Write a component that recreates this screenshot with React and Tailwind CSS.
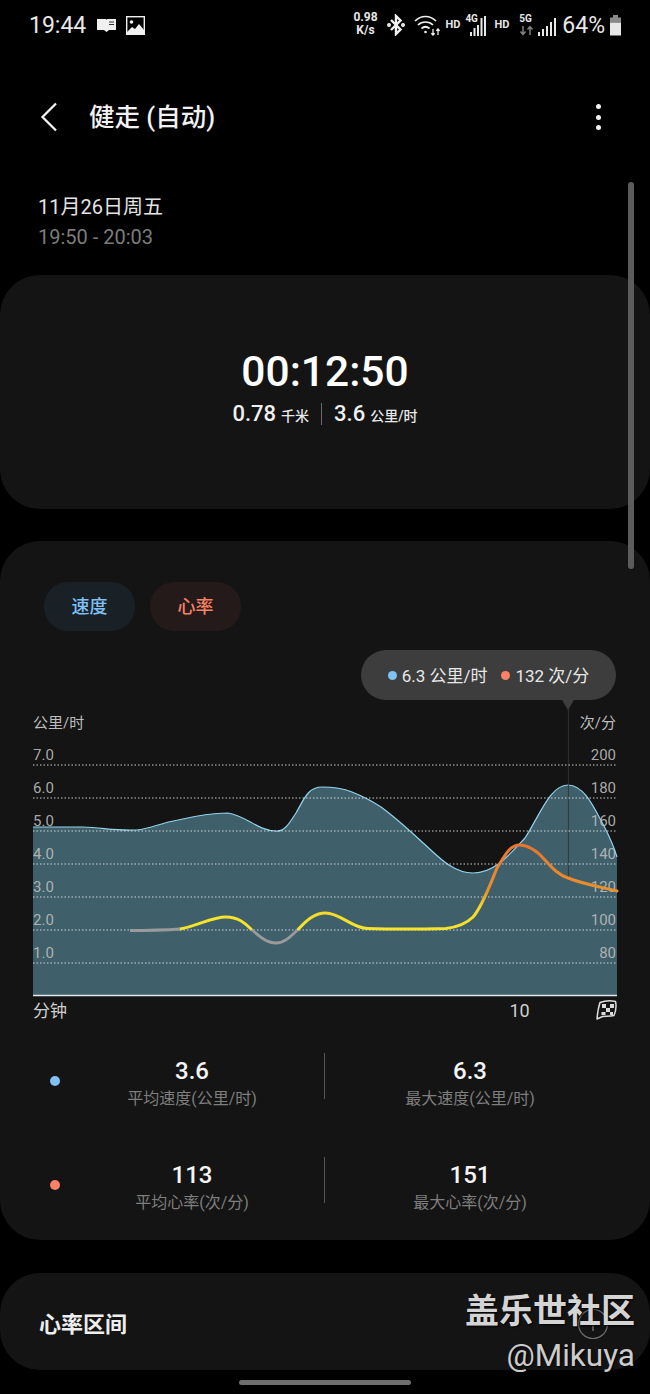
const FONT = { fontFamily: '"Roboto","Noto Sans CJK SC",sans-serif' };

function Signal() {
  return (
    <svg width="20" height="22" viewBox="0 0 20 22" fill="#e8e8e8">
      <rect x="0" y="17" width="2" height="4" />
      <rect x="4" y="14" width="2" height="7" />
      <rect x="8" y="11" width="2" height="10" />
      <rect x="12" y="7" width="2" height="14" />
      <rect x="16" y="3" width="2" height="18" />
    </svg>
  );
}

function StatusBar() {
  return (
    <div className="flex h-[48px] items-center justify-between pl-[29px] pr-[28px] pt-[2px] text-[#e8e8e8]">
      <div className="flex items-center gap-[10px]">
        <span className="text-[23px] leading-none">19:44</span>
        <svg className="ml-[1px]" width="19" height="18" viewBox="0 0 19 18" fill="#f0f0f0">
          <path d="M0 3h8.500c.5 0 .9.3 1 .7.1-.4.5-.7 1-.7H19v11h-7l-2.500 2L7 14H0z" />
          <path d="M12 6h5M12 8.500h5" stroke="#333" strokeWidth="1" />
        </svg>
        <svg width="19" height="19" viewBox="0 0 19 19">
          <rect x="0.700" y="0.700" width="17.600" height="17.600" fill="none" stroke="#f0f0f0" strokeWidth="1.400" />
          <circle cx="5.500" cy="6" r="1.800" fill="#f0f0f0" />
          <path d="M1 16l5-5 3 2 4-5 5 6v4H1z" fill="#f0f0f0" />
        </svg>
      </div>
      <div className="flex items-center">
        <div className="-mt-[2px] flex w-[26px] flex-col items-center text-[12px] font-bold leading-[13px]">
          <span>0.98</span>
          <span>K/s</span>
        </div>
        <svg className="ml-[9px]" width="18" height="22" viewBox="0 0 18 22" fill="none" stroke="#f2f2f2" strokeWidth="2.400">
          <path d="M4 6l9.500 9.500L9 20V2l4.500 4.500L4 16" />
          <circle cx="2" cy="11" r="0.800" fill="#f2f2f2" />
          <circle cx="16" cy="11" r="0.800" fill="#f2f2f2" />
        </svg>
        <svg className="ml-[9px]" width="26" height="22" viewBox="0 0 26 22" fill="none" stroke="#f0f0f0" strokeWidth="1.700">
          <path d="M1 7c6-6 15-6 21 0M4 11c4-4 11-4 15 0M7.500 14.500c2.500-2.200 5.500-2.200 8 0" />
          <circle cx="11.500" cy="18" r="1.300" fill="#f0f0f0" stroke="none" />
          <path d="M19 15v6M17.300 19.200l1.700 1.800 1.700-1.800M24 21v-6M22.300 16.800l1.700-1.800 1.700 1.800" strokeWidth="1.300" />
        </svg>
        <span className="ml-[5px] text-[11px] font-bold">HD</span>
        <div className="relative ml-[5px] h-[24px] w-[22px]">
          <span className="absolute left-0 top-0 text-[10px] font-bold leading-[12px]">4G</span>
          <svg className="absolute left-0 top-0" width="22" height="24" viewBox="0 0 22 24" fill="#e8e8e8">
            <rect x="5" y="19" width="2" height="4" />
            <rect x="8.500" y="15" width="2" height="8" />
            <rect x="12" y="12" width="2" height="11" />
            <rect x="15.500" y="5" width="2" height="18" />
            <rect x="19" y="3" width="2" height="20" />
          </svg>
        </div>
        <span className="ml-[7px] text-[11px] font-bold">HD</span>
        <div className="relative ml-[10px] h-[24px] w-[16px]">
          <span className="absolute left-0 top-0 text-[10px] font-bold leading-[12px]">5G</span>
          <svg className="absolute left-0 top-[13px]" width="16" height="10" viewBox="0 0 16 10" fill="none" stroke="#7d7d7d" strokeWidth="1.500">
            <path d="M4 0v8M1.500 5.500L4 8.500l2.500-3M11 9V1M8.500 3.500L11 .5l2.500 3" />
          </svg>
        </div>
        <div className="ml-[3px] mt-[2px] flex">
          <Signal />
        </div>
        <span className="ml-[4px] text-[23px] leading-none">64%</span>
        <svg className="ml-[4px]" width="13" height="24" viewBox="0 0 13 24">
          <rect x="4" y="2" width="5" height="3" fill="#8a8a8a" />
          <rect x="1" y="4.500" width="11" height="5" fill="#8a8a8a" />
          <rect x="1" y="9.500" width="11" height="13" fill="#e8e8e8" />
        </svg>
      </div>
    </div>
  );
}

function Header() {
  return (
    <div className="mt-[44px] flex h-[50px] items-center justify-between pl-[39px] pr-[49px]">
      <div className="flex items-center">
        <svg width="20" height="32" viewBox="0 0 20 32" fill="none" stroke="#f2f2f2" strokeWidth="2.300">
          <path d="M17 2.500L3.500 16 17 29.500" />
        </svg>
        <span className="ml-[30px] pt-[2px] text-[25.500px] font-medium leading-none text-[#f2f2f2]">健走 (自动)</span>
      </div>
      <div className="flex flex-col gap-[5.500px]">
        <span className="size-[5px] rounded-full bg-[#f2f2f2]" />
        <span className="size-[5px] rounded-full bg-[#f2f2f2]" />
        <span className="size-[5px] rounded-full bg-[#f2f2f2]" />
      </div>
    </div>
  );
}

function Summary() {
  return (
    <div className="mt-[26px] flex h-[234px] flex-col items-center rounded-[40px] bg-[#141414] pt-[73px] text-white">
      <div className="text-[42.500px] font-medium leading-[48px]">00:12:50</div>
      <div className="mt-[6px] flex h-[24px] items-center font-medium">
        <span className="text-[22px] leading-none text-[#f0f0f0]">0.78</span>
        <span className="ml-[5px] mt-[4px] text-[14px] leading-none text-[#e8e8e8]">千米</span>
        <span className="mx-[12px] h-[22px] w-px bg-[#6a6a6a]" />
        <span className="text-[22px] leading-none text-[#f0f0f0]">3.6</span>
        <span className="ml-[5px] mt-[4px] text-[14px] leading-none text-[#e8e8e8]">公里/时</span>
      </div>
    </div>
  );
}

const AREA_LINE =
  "M33 827C50 827 65 827 83 827C105 828 115 831 137 830C150 829 160 823 178 820C195 816 212 813 228 813C245 815 258 831 276 831C285 832 290 822 296 813C304 799 308 787 322 787C335 787 342 788 352 792C362 796 372 801 381 807C396 818 408 829 421 841C438 856 452 873 473 873C495 873 510 854 525 838C540 815 550 785 568 785C585 785 595 810 605 828C610 838 614 847 617 857";
const LINE_A =
  "M180 929C197 926 212 917 226 917C238 917 245 923 251 929";
const LINE_GRAY = "M130 930.500C150 930.500 165 930 180 929";
const LINE_B =
  "M251 929C260 937 267 943 276 943C285 943 292 935 298.500 929";
const LINE_C =
  "M298.500 929C306 921 314 913 325.500 913C340 913 352 928 367 928.500C385 929 425 929 446 928.500C458 927 467 923 473 917C482 907 490 885 497 868C505 855 510 845 519.500 845C530 845 538 852 545 860C553 869 559 875 568 878C583 884 600 887 617 891";

function Chart() {
  const grid = [765, 798, 831, 864, 897, 930, 963];
  const left = ["7.0", "6.0", "5.0", "4.0", "3.0", "2.0", "1.0"];
  const right = ["200", "180", "160", "140", "120", "100", "80"];
  return (
    <svg className="block" width="650" height="320" viewBox="0 700 650 320" style={FONT}>
      <defs>
        <linearGradient id="hr" gradientUnits="userSpaceOnUse" x1="0" y1="845" x2="0" y2="925">
          <stop offset="0" stopColor="#e9752c" />
          <stop offset="0.580" stopColor="#ec912a" />
          <stop offset="0.760" stopColor="#f3d52a" />
          <stop offset="1" stopColor="#f6e32c" />
        </linearGradient>
      </defs>
      <path d={`${AREA_LINE}L617 995L33 995Z`} fill="#3f5f6b" />
      <path d={AREA_LINE} fill="none" stroke="#93d3ec" strokeWidth="1.200" />
      <line x1="568.500" y1="700" x2="568.500" y2="878" stroke="#333333" strokeOpacity="0.800" strokeWidth="1.200" />
      {grid.map((y) => (
        <line key={y} x1="33" x2="617" y1={y} y2={y} stroke="#e8e8e8" strokeWidth="1.200" strokeDasharray="1.500 2" strokeOpacity="0.850" />
      ))}
      <line x1="33" x2="617" y1="995.500" y2="995.500" stroke="#dfe8ec" strokeWidth="1.500" />
      {left.map((t, i) => (
        <text key={t} x="33" y={grid[i] - 5} fontSize="15" fill="#bdbdbd" fillOpacity="0.900">{t}</text>
      ))}
      {right.map((t, i) => (
        <text key={t} x="616" y={grid[i] - 5} fontSize="15" textAnchor="end" fill="#bdbdbd" fillOpacity="0.900">{t}</text>
      ))}
      <text x="33" y="728" fontSize="15" fill="#bdbdbd">公里/时</text>
      <text x="616" y="728" fontSize="15" textAnchor="end" fill="#bdbdbd">次/分</text>
      <path d={LINE_B} fill="none" stroke="#9a9a9a" strokeWidth="2.800" strokeLinecap="round" />
      <path d={LINE_A} fill="none" stroke="#f6e32c" strokeWidth="2.800" strokeLinecap="round" />
      <path d={LINE_GRAY} fill="none" stroke="#9a9a9a" strokeWidth="2.800" />
      <path d={LINE_C} fill="none" stroke="url(#hr)" strokeWidth="3" strokeLinecap="round" />
      <text x="33" y="1017" fontSize="17" fill="#cfcfcf">分钟</text>
      <text x="519.500" y="1017" fontSize="18" textAnchor="middle" fill="#cfcfcf">10</text>
      <g>
        <path d="M600 1002.500C604 1001 611 1000.500 615.500 1001.500C616.500 1006 615.500 1012 614 1015.500C610 1016.500 605 1016 602.500 1016.500L597 1019C597.500 1013 598.500 1007 600 1002.500Z" fill="#161616" stroke="#dcdcdc" strokeWidth="1.500" strokeLinejoin="round" />
        <path d="M602 1004h4v4h-4zM610 1004h4v4h-4zM606 1008h4v4h-4zM601.500 1012h4v3h-4zM610 1012h3v3h-3z" fill="#dcdcdc" />
      </g>
    </svg>
  );
}

function Tooltip() {
  return (
    <div className="absolute left-[361px] top-[109px] z-10">
      <div className="flex h-[50px] w-[255px] items-center justify-center rounded-[25px] bg-[#3d3d3d] pt-[2px] text-[17px] leading-none text-[#e8e8e8]">
        <span className="-mt-[2px] mr-[5px] size-[9px] rounded-full bg-[#7fc0f5]" />
        <span>6.3 公里/时</span>
        <span className="-mt-[2px] ml-[14px] mr-[5px] size-[9px] rounded-full bg-[#f98266]" />
        <span>132 次/分</span>
      </div>
      <div className="ml-[201px] h-0 w-0 border-x-[6px] border-t-[10px] border-x-transparent border-t-[#3d3d3d]" />
    </div>
  );
}

function Stat({ value, label, width }) {
  return (
    <div className={`flex ${width} flex-col items-center pt-[4px]`}>
      <div className="text-[24px] font-medium leading-[28px] text-[#f4f4f4]">{value}</div>
      <div className="mt-[4px] text-[16px] leading-[20px] text-[#7e7e7e]">{label}</div>
    </div>
  );
}

function StatRow({ color, a, b }) {
  return (
    <div className="flex h-[58px] items-center">
      <span className={`ml-[50px] size-[10px] shrink-0 rounded-full ${color}`} />
      <Stat {...a} width="w-[264px]" />
      <span className="-mt-[11px] h-[46px] w-px bg-[#555555]" />
      <Stat {...b} width="w-[290px]" />
    </div>
  );
}

function ChartCard() {
  return (
    <div className="relative mt-[32px] h-[699px] rounded-[40px] bg-[#141414]">
      <div className="flex gap-[15px] pl-[44px] pt-[41px]">
        <div className="flex h-[49px] w-[91px] items-center justify-center rounded-[24px] bg-[#192127] text-[18px] font-medium text-[#7fc0f5]">速度</div>
        <div className="flex h-[49px] w-[91px] items-center justify-center rounded-[24px] bg-[#231a19] text-[18px] font-medium text-[#f98266]">心率</div>
      </div>
      <Tooltip />
      <div className="mt-[69px]">
        <Chart />
      </div>
      <div className="mt-[32px] flex flex-col gap-[46px]">
        <StatRow
          color="bg-[#7fc0f5]"
          a={{ value: "3.6", label: "平均速度(公里/时)" }}
          b={{ value: "6.3", label: "最大速度(公里/时)" }}
        />
        <StatRow
          color="bg-[#f98266]"
          a={{ value: "113", label: "平均心率(次/分)" }}
          b={{ value: "151", label: "最大心率(次/分)" }}
        />
      </div>
    </div>
  );
}

function ZoneCard() {
  return (
    <div className="relative mt-[33px] flex h-[97px] items-center rounded-[40px] bg-[#141414] pl-[39px] pt-[6px]">
      <span className="text-[22px] font-bold leading-none text-[#eeeeee]">心率区间</span>
      <svg className="absolute left-[577px] top-[35px]" width="32" height="32" viewBox="0 0 32 32" fill="none" stroke="#6e6e6e" strokeWidth="1.200">
        <circle cx="16" cy="16" r="14.500" />
        <path d="M16 14v9M16 10v1.500" strokeWidth="1.500" />
      </svg>
    </div>
  );
}

export default function App() {
  return (
    <div className="relative h-[1394px] w-[650px] overflow-hidden bg-black" style={FONT}>
      <StatusBar />
      <Header />
      <div className="mt-[53px] pl-[38px]">
        <div className="text-[20px] leading-[24px] text-[#e4e4e4]">11月26日周五</div>
        <div className="mt-[6px] text-[20px] leading-[24px] text-[#7c7c7c]">19:50 - 20:03</div>
      </div>
      <Summary />
      <ChartCard />
      <ZoneCard />
      <div className="mx-auto mt-[10px] h-[5px] w-[172px] rounded-full bg-[#6e6e6e]" />
      <div className="absolute left-[628px] top-[182px] h-[387px] w-[6px] rounded-full bg-[#5c5c5c]" />
      <div className="absolute right-[15px] top-[1289px] flex flex-col items-end text-[#d4d4d4] [text-shadow:1px_1px_2px_#000]">
        <span className="text-[34px] font-bold leading-[44px]">盖乐世社区</span>
        <span className="mt-[5px] text-[31.500px] leading-[36px] text-[#cccccc]">@Mikuya</span>
      </div>
    </div>
  );
}
